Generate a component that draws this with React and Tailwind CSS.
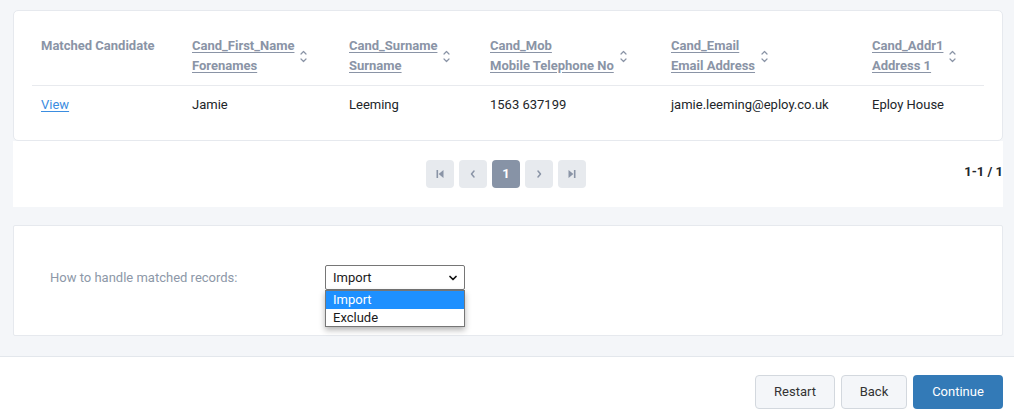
import React from 'react';
import { ChevronDown } from 'lucide-react';

const columns = [
  { key: 'first', code: 'Cand_First_Name', label: 'Forenames', width: 'w-[157px]' },
  { key: 'surname', code: 'Cand_Surname', label: 'Surname', width: 'w-[141px]' },
  { key: 'mob', code: 'Cand_Mob', label: 'Mobile Telephone No', width: 'w-[181px]' },
  { key: 'email', code: 'Cand_Email', label: 'Email Address', width: 'w-[201px]' },
  { key: 'addr1', code: 'Cand_Addr1', label: 'Address 1', width: 'w-auto' },
];

const rows = [
  {
    id: 1,
    first: 'Jamie',
    surname: 'Leeming',
    mob: '1563 637199',
    email: 'jamie.leeming@eploy.co.uk',
    addr1: 'Eploy House',
  },
];

const SortIcon = () => (
  <svg width="7" height="13" viewBox="0 0 7 13" fill="none" stroke="#8a94a6" strokeWidth="1.2" strokeLinecap="round" strokeLinejoin="round" className="shrink-0">
    <path d="M1 4 L3.5 1.5 L6 4" />
    <path d="M1 9 L3.5 11.5 L6 9" />
  </svg>
);

const PageIcon = ({ type }) => {
  if (type === 'first') {
    return (
      <svg width="10" height="10" viewBox="0 0 10 10" fill="#8a94a6">
        <rect x="1.5" y="1" width="1.6" height="8" />
        <path d="M8.5 1 L3.6 5 L8.5 9 Z" />
      </svg>
    );
  }
  if (type === 'last') {
    return (
      <svg width="10" height="10" viewBox="0 0 10 10" fill="#8a94a6">
        <path d="M1.5 1 L6.4 5 L1.5 9 Z" />
        <rect x="6.9" y="1" width="1.6" height="8" />
      </svg>
    );
  }
  return (
    <svg width="10" height="10" viewBox="0 0 10 10" fill="none" stroke="#8a94a6" strokeWidth="1.5" strokeLinecap="round" strokeLinejoin="round">
      {type === 'prev' ? <path d="M6 2 L3.5 5 L6 8" /> : <path d="M4 2 L6.5 5 L4 8" />}
    </svg>
  );
};

const PageButton = ({ children, active }) => (
  <button
    className={`w-[28px] h-[28px] rounded-[4px] flex items-center justify-center text-[13px] font-bold ${
      active ? 'bg-[#8793a6] text-white' : 'bg-[#e7eaee]'
    }`}
  >
    {children}
  </button>
);

export default function App() {
  return (
    <div className="min-h-[418px] bg-[#f4f6f9] flex flex-col text-[13px] text-[#212529]" style={{ fontFamily: 'Roboto, "Liberation Sans", sans-serif' }}>
      <div className="pl-[13px] pr-[11px] pt-[10px]">
        {/* Matched records table */}
        <div className="bg-white border border-[#e6e9ee] rounded-[5px] px-[18px] pt-[25px] pb-[18px]">
          <table className="w-full table-fixed border-collapse">
            <colgroup>
              <col className="w-[151px]" />
              {columns.map(col => (
                <col key={col.key} className={col.width} />
              ))}
            </colgroup>
            <thead>
              <tr className="border-b border-[#e8eaee] text-[#8a94a6] font-bold text-left leading-5">
                <th className="pl-[9px] pb-[9px] align-top font-bold">Matched Candidate</th>
                {columns.map(col => (
                  <th key={col.key} className="pl-[9px] pb-[9px] align-top font-bold">
                    <div className="flex items-center gap-[6px]">
                      <a href="#" className="block">
                        <span className="block underline underline-offset-2">{col.code}</span>
                        <span className="block underline underline-offset-2">{col.label}</span>
                      </a>
                      <SortIcon />
                    </div>
                  </th>
                ))}
              </tr>
            </thead>
            <tbody>
              {rows.map(row => (
                <tr key={row.id} className="leading-5">
                  <td className="pl-[9px] pt-[9px] pb-[7px]">
                    <a href="#" className="text-[#3b8de0] underline underline-offset-2">View</a>
                  </td>
                  {columns.map(col => (
                    <td key={col.key} className="pl-[9px] pt-[9px] pb-[7px] whitespace-nowrap">
                      {row[col.key]}
                    </td>
                  ))}
                </tr>
              ))}
            </tbody>
          </table>
        </div>

        {/* Pager */}
        <div className="bg-white h-[66px] flex items-start pt-[19px]">
          <div className="flex-1" />
          <div className="flex gap-[5px] mr-[4px]">
            <PageButton><PageIcon type="first" /></PageButton>
            <PageButton><PageIcon type="prev" /></PageButton>
            <PageButton active>1</PageButton>
            <PageButton><PageIcon type="next" /></PageButton>
            <PageButton><PageIcon type="last" /></PageButton>
          </div>
          <div className="flex-1 text-right font-bold pt-[2px] leading-5">1-1 / 1</div>
        </div>

        {/* Match handling */}
        <div className="mt-[18px] bg-white border border-[#e6e9ee] rounded-[2px] pl-[36px] pt-[39px] pb-[45px]">
          <div className="flex items-center">
            <label className="w-[275px] text-[#8d98a8]">How to handle matched records:</label>
            <div className="relative">
              <div className="w-[140px] h-[25px] border border-[#767676] rounded-[2px] bg-white flex items-center justify-between pl-[7px] pr-[5px] text-[#1a1a1a]">
                <span>Import</span>
                <ChevronDown size={12} strokeWidth={3.5} color="#111" />
              </div>
              <ul className="absolute left-0 top-full w-[140px] border border-[#767676] bg-white shadow-[0_3px_6px_rgba(0,0,0,0.3)] z-10 leading-[17.5px]">
                <li className="bg-[#1e90ff] text-white pl-[7px]">Import</li>
                <li className="pl-[7px] text-[#1a1a1a]">Exclude</li>
              </ul>
            </div>
          </div>
        </div>
      </div>

      {/* Wizard footer */}
      <div className="mt-[20px] flex-1 bg-white border-t border-[#e3e7ec] pt-[18px] pb-[9px] px-[11px] flex justify-end gap-[6px]">
        <button className="w-[80px] h-[34px] rounded-[4px] border border-[#d3d8de] bg-[#f4f6f9] text-[#333]">Restart</button>
        <button className="w-[66px] h-[34px] rounded-[4px] border border-[#d3d8de] bg-[#f4f6f9] text-[#333]">Back</button>
        <button className="w-[90px] h-[34px] rounded-[4px] bg-[#337ab7] text-white">Continue</button>
      </div>
    </div>
  );
}
